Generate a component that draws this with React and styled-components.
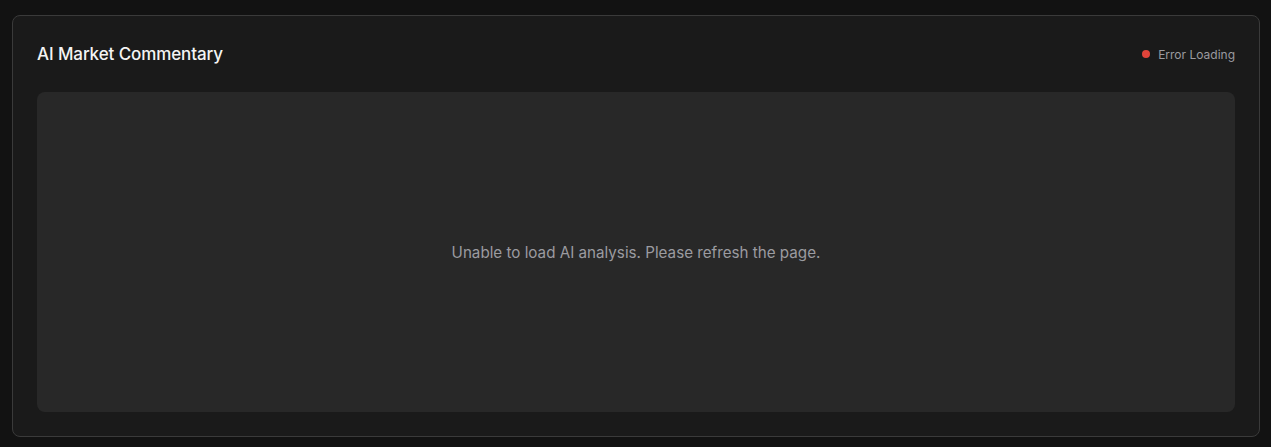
import React from "react";
import styled, { createGlobalStyle } from "styled-components";

const Global = createGlobalStyle`
  html, body { margin: 0; padding: 0; background: #121212; }
  body { font-family: Inter, "Noto Sans", sans-serif; -webkit-font-smoothing: antialiased; }
`;

const Page = styled.div`
  padding: 15px 11px 10px 12px;
`;

const Card = styled.section`
  background: #1a1a1a;
  border: 1px solid #3a3a3a;
  border-radius: 8px;
  padding: 24px;
  display: flex;
  flex-direction: column;
  gap: 24px;
`;

const Header = styled.div`
  display: flex;
  align-items: center;
  justify-content: space-between;
  height: 28px;
`;

const Title = styled.h2`
  margin: 0;
  font-size: 17px;
  font-weight: 500;
  color: #f4f4f4;
  letter-spacing: -0.1px;
`;

const Status = styled.div`
  display: flex;
  align-items: center;
  gap: 8px;
  font-size: 12px;
  color: #9b9ba0;
`;

const Dot = styled.span`
  width: 8px;
  height: 8px;
  border-radius: 50%;
  background: ${(p) => p.$color};
`;

const Body = styled.div`
  background: #282828;
  border-radius: 8px;
  height: 320px;
  display: flex;
  align-items: center;
  justify-content: center;
`;

const Message = styled.p`
  margin: 0;
  font-size: 15.2px;
  color: #9b9ba0;
`;

export default function App() {
  return (
    <>
      <Global />
      <Page>
        <Card>
          <Header>
            <Title>AI Market Commentary</Title>
            <Status>
              <Dot $color="#e0443a" />
              Error Loading
            </Status>
          </Header>
          <Body>
            <Message>Unable to load AI analysis. Please refresh the page.</Message>
          </Body>
        </Card>
      </Page>
    </>
  );
}
